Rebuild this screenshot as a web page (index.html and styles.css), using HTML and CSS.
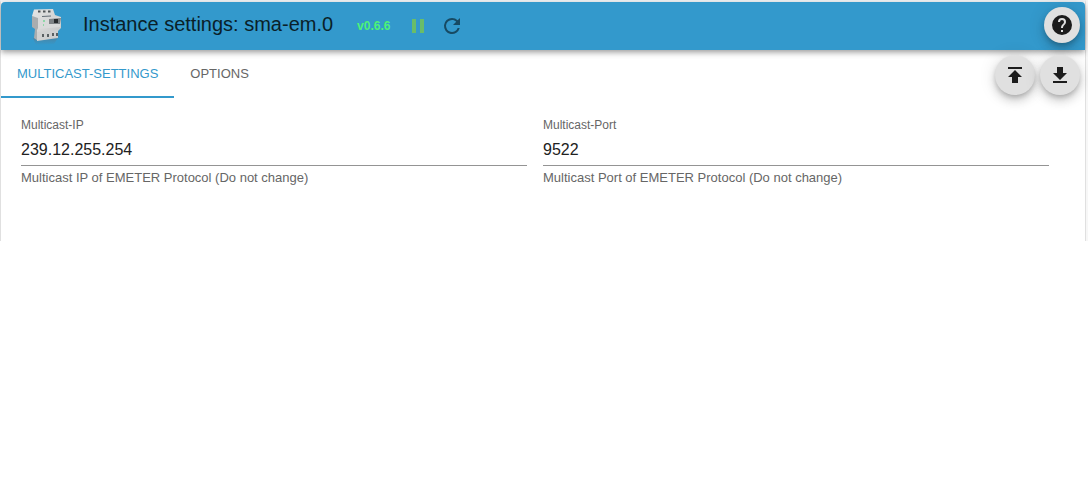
FILE: index.html
```html
<!DOCTYPE html>
<html lang="en">
<head>
<meta charset="utf-8">
<title>Instance settings: sma-em.0</title>
<link rel="stylesheet" href="styles.css">
</head>
<body>
<main class="panel">
  <header class="toolbar">
    <svg class="device" viewBox="0 0 36 38" aria-hidden="true">
      <defs>
        <linearGradient id="front" x1="0" y1="0" x2="1" y2="1">
          <stop offset="0" stop-color="#e6e6e5"/>
          <stop offset="1" stop-color="#c2c4c5"/>
        </linearGradient>
        <linearGradient id="shade" x1="0" y1="0" x2="0" y2="1">
          <stop offset="0" stop-color="#567b92" stop-opacity=".8"/>
          <stop offset="1" stop-color="#567b92" stop-opacity="0"/>
        </linearGradient>
      </defs>
      <path d="M5 31 31 29 26 37 8 38Z" fill="url(#shade)"/>
      <path d="M4 9 10 10 10 34 6 31 7 22 4 20Z" fill="#a9adaf"/>
      <path d="M6 2.500 25 2 27 8 33 10 33 21 30 24 30 31 9 34 9 23 10 21 10 11 4 9Z" fill="url(#front)"/>
      <path d="M10 11 33 10 32 20 10 22Z" fill="#d9dada"/>
      <path d="M9 25 30 23 30 30 9 33Z" fill="#cfd1d1"/>
      <path d="M10 3.500h2.500v2H10zM15 3.500h2.500v2H15zM20 3.500h2.500v2H20z" fill="#4f5457"/>
      <path d="M14 9.500 23 9" stroke="#667078" stroke-width="1"/>
      <path d="M21 12 33 11 32 17 21 17Z" fill="#7e8386"/>
      <path d="M26 12 30 12 30 16 26 16Z" fill="#282c2f"/>
      <path d="M15 13h2v2h-2zM15 17h1v2h-1z" fill="#8fd6a8"/>
      <path d="M14 27h2v3h-2zM19 27h2v3h-2zM24 26h2v3h-2zM28 26h2v3h-2z" fill="#5a6063"/>
    </svg>
    <h1 class="title">Instance settings: sma-em.0</h1>
    <span class="version">v0.6.6</span>
    <button class="icon-button pause" type="button" aria-label="Pause instance">
      <svg viewBox="0 0 24 24"><path d="M6 19h4V5H6v14zm8-14v14h4V5h-4z"/></svg>
    </button>
    <button class="icon-button reload" type="button" aria-label="Restart instance">
      <svg viewBox="0 0 24 24"><path d="M17.65 6.35A7.96 7.96 0 0 0 12 4a8 8 0 1 0 7.73 10h-2.08A6 6 0 1 1 12 6c1.66 0 3.14.69 4.22 1.78L13 11h7V4l-2.35 2.35z"/></svg>
    </button>
    <button class="fab help" type="button" aria-label="Help">
      <svg viewBox="0 0 24 24"><path d="M12 2a10 10 0 1 0 0 20 10 10 0 0 0 0-20zm1 17h-2v-2h2v2zm2.07-7.75-.9.92C13.45 12.9 13 13.5 13 15h-2v-.5c0-1.1.45-2.1 1.17-2.83l1.24-1.26c.37-.36.59-.86.59-1.41a2 2 0 1 0-4 0H8a4 4 0 1 1 8 0c0 .88-.36 1.68-.93 2.25z"/></svg>
    </button>
  </header>
  <div class="subbar">
    <div class="tabs" role="tablist">
      <button class="tab selected" type="button" role="tab" aria-selected="true">MULTICAST-SETTINGS</button>
      <button class="tab" type="button" role="tab" aria-selected="false">OPTIONS</button>
    </div>
    <div class="actions">
      <button class="fab" type="button" aria-label="Load settings from file">
        <svg viewBox="0 0 24 24"><path d="M5 4v2h14V4H5zm0 10h4v6h6v-6h4l-7-7-7 7z"/></svg>
      </button>
      <button class="fab" type="button" aria-label="Save settings to file">
        <svg viewBox="0 0 24 24"><path d="M19 10h-4V4H9v6H5l7 7 7-7zM5 18v2h14v-2H5z"/></svg>
      </button>
    </div>
  </div>
  <form class="fields">
    <div class="field">
      <label for="ip">Multicast-IP</label>
      <input id="ip" type="text" value="239.12.255.254" aria-describedby="ip-help">
      <p id="ip-help">Multicast IP of EMETER Protocol (Do not change)</p>
    </div>
    <div class="field">
      <label for="port">Multicast-Port</label>
      <input id="port" type="text" value="9522" aria-describedby="port-help">
      <p id="port-help">Multicast Port of EMETER Protocol (Do not change)</p>
    </div>
  </form>
</main>
</body>
</html>
```
FILE: styles.css
```css
* {
  box-sizing: border-box;
}

body {
  margin: 0;
  background: #fff;
  color: #212121;
  font-family: "Liberation Sans", Arial, sans-serif;
}

.panel {
  margin-right: 2px;
  padding-bottom: 55px;
  border: 1px solid #e0e0e0;
  border-top: 2px solid #f0f3f5;
  border-bottom: 0;
  box-shadow: 2px 0 0 #f7f7f7;
}

.toolbar {
  display: flex;
  align-items: center;
  height: 48px;
  padding: 0 5px 0 27px;
  border-radius: 4px 4px 0 0;
  background: #3399cc;
  box-shadow: 0 2px 4px -1px rgba(0, 0, 0, .2), 0 4px 5px rgba(0, 0, 0, .14), 0 1px 10px rgba(0, 0, 0, .12);
}

.device {
  width: 36px;
  height: 38px;
}

.title {
  margin: 0 24px 4px 19px;
  color: #0a1f29;
  font-size: 20px;
  font-weight: 400;
  line-height: 32px;
}

.version {
  color: #4df278;
  font-size: 12px;
  font-weight: 700;
}

button {
  display: flex;
  align-items: center;
  justify-content: center;
  padding: 0;
  border: 0;
  background: none;
  font-family: inherit;
  cursor: pointer;
}

svg {
  display: block;
  fill: currentColor;
}

.icon-button {
  width: 24px;
  height: 24px;
}

.icon-button svg,
.fab svg {
  width: 24px;
  height: 24px;
}

.pause {
  margin-left: 16px;
  color: #69bd69;
}

.reload {
  margin-left: 10px;
  color: #174a63;
}

.fab {
  width: 40px;
  height: 40px;
  border-radius: 50%;
  background: #e0e0e0;
  color: #1c1c1c;
  box-shadow: 0 3px 5px -1px rgba(0, 0, 0, .2), 0 6px 10px rgba(0, 0, 0, .14), 0 1px 18px rgba(0, 0, 0, .12);
}

.help {
  width: 36px;
  height: 36px;
  margin: 0 0 2px auto;
}

.subbar {
  display: flex;
  justify-content: space-between;
  height: 48px;
}

.tabs {
  display: flex;
}

.tab {
  padding: 0 16px;
  border-bottom: 2px solid transparent;
  color: #666;
  font-size: 13px;
}

.tab.selected {
  border-color: #3399cc;
  color: #3399cc;
}

.actions {
  display: flex;
  gap: 5px;
  padding: 5px 5px 0 0;
}

.fields {
  display: grid;
  grid-template-columns: 1fr 1fr;
  gap: 16px;
  padding: 19px 36px 0 20px;
}

.field label,
.field p {
  display: block;
  margin: 0;
  color: #666;
  font-size: 12px;
  line-height: 16px;
}

.field input {
  display: block;
  width: 100%;
  height: 33px;
  padding: 2px 0 0;
  border: 0;
  border-bottom: 1px solid #949494;
  outline: 0;
  background: none;
  color: #212121;
  font: 16px "Liberation Sans", Arial, sans-serif;
}

.field p {
  margin-top: 4px;
  font-size: 13px;
}
```
